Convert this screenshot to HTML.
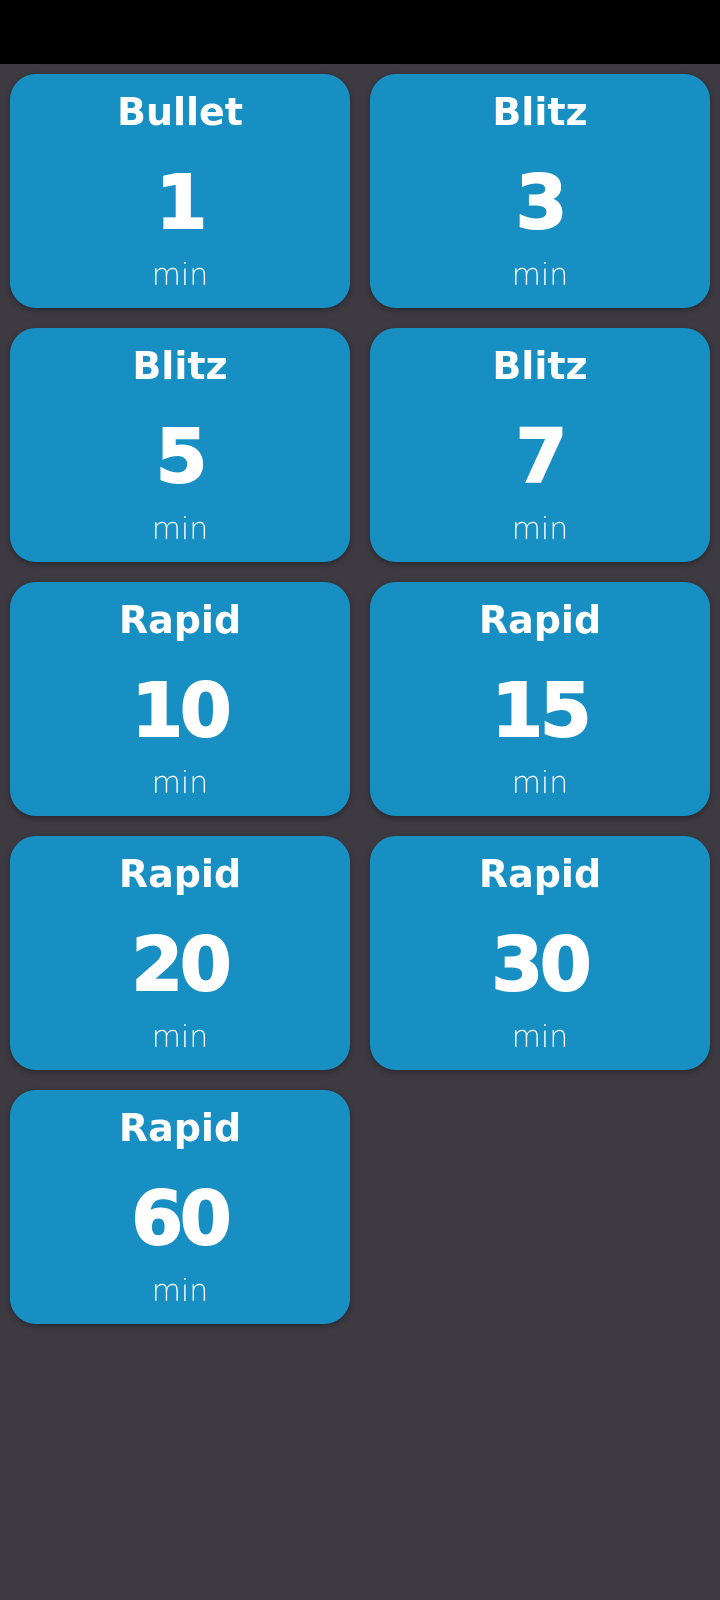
<!DOCTYPE html>
<html><head><style>
body{margin:0;width:720px;height:1600px;background:#3d3a41;position:relative;overflow:hidden;font-family:"Liberation Sans",sans-serif}
.top{position:absolute;left:0;top:0;width:720px;height:64px;background:#000}
.c{position:absolute;width:340px;height:234px;background:#188fc2;border-radius:26px;color:#fff;text-align:center;box-shadow:0 2px 6px rgba(0,0,0,.35)}
.t{position:absolute;top:16px;width:100%;font-size:38px;font-weight:bold;font-family:"Comic Sans MS","DejaVu Sans",sans-serif;letter-spacing:0px}
.n{position:absolute;top:84px;width:100%;font-size:74px;font-weight:900;font-family:"DejaVu Sans",sans-serif;letter-spacing:-3px;line-height:90px;-webkit-text-stroke:2px #fff}
.m{position:absolute;top:182px;width:100%;font-size:30px;font-family:"DejaVu Sans",sans-serif;font-weight:200;line-height:40px}
</style></head><body>
<div class="top"></div>
<div class="c" style="left:10px;top:74px"><div class="t">Bullet</div><div class="n">1</div><div class="m">min</div></div>
<div class="c" style="left:370px;top:74px"><div class="t">Blitz</div><div class="n">3</div><div class="m">min</div></div>
<div class="c" style="left:10px;top:328px"><div class="t">Blitz</div><div class="n">5</div><div class="m">min</div></div>
<div class="c" style="left:370px;top:328px"><div class="t">Blitz</div><div class="n">7</div><div class="m">min</div></div>
<div class="c" style="left:10px;top:582px"><div class="t">Rapid</div><div class="n">10</div><div class="m">min</div></div>
<div class="c" style="left:370px;top:582px"><div class="t">Rapid</div><div class="n">15</div><div class="m">min</div></div>
<div class="c" style="left:10px;top:836px"><div class="t">Rapid</div><div class="n">20</div><div class="m">min</div></div>
<div class="c" style="left:370px;top:836px"><div class="t">Rapid</div><div class="n">30</div><div class="m">min</div></div>
<div class="c" style="left:10px;top:1090px"><div class="t">Rapid</div><div class="n">60</div><div class="m">min</div></div>
</body></html>
